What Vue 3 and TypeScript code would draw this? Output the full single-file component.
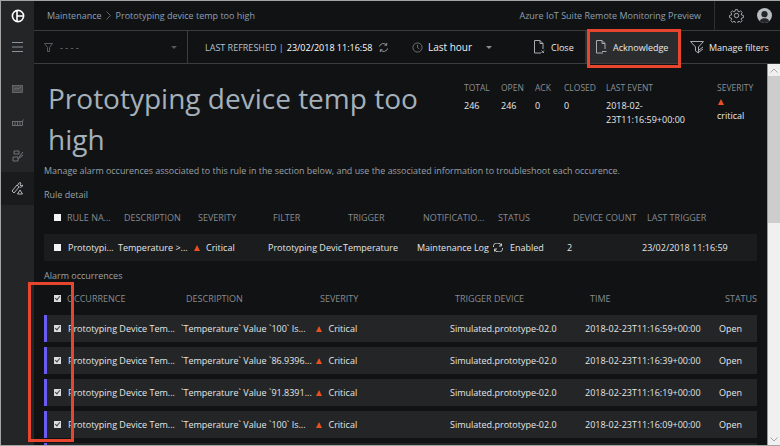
<script setup lang="ts">
const ruleHeads = ['RULE NA...', 'DESCRIPTION', 'SEVERITY', 'FILTER', 'TRIGGER', 'NOTIFICATIO...', 'STATUS', 'DEVICE COUNT', 'LAST TRIGGER']
const alarmHeads = ['OCCURRENCE', 'DESCRIPTION', 'SEVERITY', 'TRIGGER DEVICE', 'TIME', 'STATUS']
const stats = [
  { label: 'TOTAL', value: '246', width: 37 },
  { label: 'OPEN', value: '246', width: 34 },
  { label: 'ACK', value: '0', width: 29 },
  { label: 'CLOSED', value: '0', width: 42 },
  { label: 'LAST EVENT', value: '2018-02-23T11:16:59+00:00', width: 111 },
]
const alarms = [
  { value: "`Temperature` Value `100` Is...", time: '2018-02-23T11:16:59+00:00' },
  { value: "`Temperature` Value `86.9396...", time: '2018-02-23T11:16:39+00:00' },
  { value: "`Temperature` Value `91.8391...", time: '2018-02-23T11:16:19+00:00' },
  { value: "`Temperature` Value `100` Is...", time: '2018-02-23T11:16:09+00:00' },
]
</script>

<template>
  <div class="app">
    <aside class="sidebar">
      <div class="side-logo">
        <svg width="14" height="14" viewBox="0 0 14 14" fill="none" stroke="#fff" stroke-width="1.6"><circle cx="7" cy="7" r="5.6" /><path d="M6 1.5v11M6 7h6" /></svg>
      </div>
      <div class="side-menu">
        <svg width="11" height="12" viewBox="0 0 11 12" stroke="#8b9299" stroke-width="1"><path d="M0 1.5h11M0 6h11M0 10.5h11" /></svg>
      </div>
      <div class="side-item">
        <svg width="12" height="10" viewBox="0 0 12 10" fill="#4a4d50" stroke="#777" stroke-width=".7"><rect x=".5" y=".5" width="10" height="7" /><path d="M2 5l2-2 2 1 3-2" fill="none" /></svg>
      </div>
      <div class="side-item">
        <svg width="12" height="8" viewBox="0 0 12 8" fill="none" stroke="#7c7f82" stroke-width=".8"><rect x=".5" y="2.500" width="10" height="4" /><path d="M3 3v3M5.500 3v3M8 3v3M10.500 2l1-1.500" /></svg>
      </div>
      <div class="side-item">
        <svg width="12" height="12" viewBox="0 0 12 12" fill="none" stroke="#7c7f82" stroke-width=".9"><path d="M2 1h5v3H2zM1 7h5v4H1zM7 7l4-5M6 9l5-4" /></svg>
      </div>
      <div class="side-item active">
        <svg width="13" height="13" viewBox="0 0 13 13" fill="none" stroke="#b5b8bb" stroke-width="1"><path d="M1 9l5-6 2 2-5 6zM7 3a2 2 0 0 1 3-2l-1 2 1 1 1.500-1a2 2 0 0 1-3 2M9 8l-2.500 4h5z" /></svg>
      </div>
    </aside>

    <div class="main">
      <header class="topbar">
        <div class="crumbs">
          <span>Maintenance</span>
          <svg width="6" height="9" viewBox="0 0 6 9" fill="none" stroke="#5e6469"><path d="M.5.5l4 4-4 4" /></svg>
          <span>Prototyping device temp too high</span>
        </div>
        <span class="product">Azure IoT Suite Remote Monitoring Preview</span>
        <div class="top-icons">
          <svg width="15" height="15" viewBox="0 0 24 24" fill="none" stroke="#b5b8bb" stroke-width="1.500"><circle cx="12" cy="12" r="3.500" /><path d="M10 1.500h4l.6 3.200 2 .9 2.700-1.900 2.900 2.900-1.900 2.700.8 2 3.200.6v4l-3.200.6-.8 2 1.900 2.700-2.900 2.900-2.700-1.900-2 .8-.6 3.200h-4l-.6-3.200-2-.8-2.700 1.900-2.900-2.900 1.900-2.700-.9-2-3.200-.6v-4l3.200-.6.900-2-1.900-2.700 2.900-2.900 2.700 1.900 2-.9z" transform="translate(1.200 1.200) scale(.9)" /></svg>
          <span class="avatar">
            <svg width="16" height="16" viewBox="0 0 16 16" fill="#23262a"><circle cx="8" cy="6" r="3.300" /><path d="M2.500 16c0-4 2.500-5.500 5.500-5.500s5.500 1.500 5.500 5.500z" /></svg>
          </span>
        </div>
      </header>

      <div class="toolbar">
        <div class="filter-select">
          <svg width="9" height="9" viewBox="0 0 9 9" fill="none" stroke="#565a5e"><path d="M.5.500h8L5.500 4.500v4h-2v-4z" /></svg>
          <span class="filter-text">- - - -</span>
          <span class="caret dim"></span>
        </div>
        <div class="refresh">
          <span>LAST REFRESHED |</span>
          <b>23/02/2018 11:16:58</b>
          <svg width="11" height="11" viewBox="0 0 12 12" fill="none" stroke="#9a9da0"><path d="M1.500 5a4.500 4.500 0 0 1 8-1.500M10.500 7a4.500 4.500 0 0 1-8 1.500M9.500 1v2.500H7M2.500 11V8.500H5" /></svg>
        </div>
        <div class="range">
          <svg width="11" height="11" viewBox="0 0 12 12" fill="none" stroke="#777"><circle cx="6" cy="6" r="5" /><path d="M6 3v3l2 1.500" /></svg>
          <span>Last hour</span>
          <span class="caret"></span>
        </div>
        <button class="tool close">
          <svg width="12" height="14" viewBox="0 0 12 14" fill="none" stroke="#a9acaf"><path d="M8 13H1.500V.5H7L10 3.500V9M7 .5v3h3M8.500 10.500l2.500 2.500M11 10.500L8.500 13" /></svg>
          Close
        </button>
        <button class="tool ack">
          <svg width="12" height="14" viewBox="0 0 12 14" fill="none" stroke="#a9acaf"><path d="M8 13H1.500V.5H7L10 3.500V9M7 .5v3h3M7 11.500h4.500" /></svg>
          Acknowledge
        </button>
        <button class="tool manage">
          <svg width="14" height="13" viewBox="0 0 14 13" fill="none" stroke="#a9acaf"><path d="M.5.500h13L8.500 6v6L5.500 10V6zM9 9l4-3M9 11l4-3" /></svg>
          Manage filters
        </button>
      </div>

      <div class="body">
        <main class="content">
          <section class="summary">
            <h1>Prototyping device temp too high</h1>
            <div class="stats">
              <div v-for="s in stats" :key="s.label" class="stat" :style="{ width: s.width + 'px' }">
                <div class="stat-label">{{ s.label }}</div>
                <div class="stat-value">{{ s.value }}</div>
              </div>
              <div class="stat">
                <div class="stat-label">SEVERITY</div>
                <div class="stat-value"><i class="tri block"></i>critical</div>
              </div>
            </div>
          </section>

          <p class="intro">Manage alarm occurences associated to this rule in the section below, and use the associated information to troubleshoot each occurence.</p>

          <div class="section-title">Rule detail</div>
          <div class="rule-head">
            <span class="cb"></span>
            <span v-for="h in ruleHeads" :key="h">{{ h }}</span>
          </div>
          <div class="rule-row">
            <span class="cb"></span>
            <span>Prototypi...</span>
            <span>Temperature &gt;...</span>
            <span class="sev"><i class="tri"></i>Critical</span>
            <span class="nowrap">Prototyping Devic</span>
            <span>Temperature</span>
            <span class="nowrap">Maintenance Log</span>
            <span class="sev">
              <svg width="12" height="9" viewBox="0 0 12 9" fill="none" stroke="#c8cacc"><path d="M1.500 4a4 3.500 0 0 1 8-1M10.500 5a4 3.500 0 0 1-8 1M9.500 .5V3H7M2.500 8.500V6H5" /></svg>
              Enabled
            </span>
            <span>2</span>
            <span>23/02/2018 11:16:59</span>
          </div>

          <div class="section-title alarm-title">Alarm occurrences</div>
          <div class="alarm-head">
            <span class="cb checked"></span>
            <span v-for="h in alarmHeads" :key="h">{{ h }}</span>
          </div>
          <div v-for="(a, i) in alarms" :key="i" class="alarm-row">
            <span class="cb checked"></span>
            <span>Prototyping Device Tem...</span>
            <span>{{ a.value }}</span>
            <span class="sev"><i class="tri"></i>Critical</span>
            <span>Simulated.prototype-02.0</span>
            <span>{{ a.time }}</span>
            <span>Open</span>
          </div>
          <div class="alarm-row"></div>
        </main>

        <div class="scrollbar">
          <svg width="8" height="5" viewBox="0 0 8 5" fill="none" stroke="#a6a6a6"><path d="M.5 4.500L4 1l3.500 3.500" /></svg>
          <div class="thumb"></div>
          <svg class="down" width="8" height="5" viewBox="0 0 8 5" fill="none" stroke="#a6a6a6"><path d="M.5.500L4 4 7.500.5" /></svg>
        </div>
      </div>
    </div>

    <div class="mark mark-ack"></div>
    <div class="mark mark-check"></div>
  </div>
</template>

<style>
html, body {
  margin: 0;
  background: #111214;
}
</style>

<style scoped>
.app {
  position: relative;
  box-sizing: border-box;
  width: 780px;
  height: 446px;
  display: flex;
  overflow: hidden;
  border: 1px solid #a4a4a4;
  border-right: 0;
  background: #111214;
  color: #e4e5e6;
  font-family: "Open Sans", "Noto Sans", sans-serif;
  font-size: 9px;
}
.sidebar {
  flex: none;
  width: 33px;
  background: #232527;
}
.side-logo, .side-menu, .side-item {
  display: flex;
  align-items: center;
  justify-content: center;
}
.side-logo { height: 29px; }
.side-menu { height: 34px; }
.side-item { height: 33px; }
.side-item:nth-child(3) { margin-top: 9px; }
.side-item.active {
  height: 33px;
  background: #1a1b1d;
}
.main {
  flex: 1;
  min-width: 0;
  display: flex;
  flex-direction: column;
}
.topbar {
  flex: none;
  height: 29px;
  display: flex;
  align-items: center;
  border-bottom: 1px solid #3a3c3e;
  padding-left: 13px;
  color: #8ca0b3;
}
.crumbs {
  flex: 1;
  display: flex;
  align-items: center;
  gap: 4px;
}
.product {
  margin-right: 13px;
}
.top-icons {
  align-self: stretch;
  width: 66px;
  display: flex;
  align-items: center;
  gap: 13px;
  padding-left: 14px;
  box-sizing: border-box;
  border-left: 1px solid #2e3032;
}
.avatar {
  width: 15px;
  height: 15px;
  border-radius: 50%;
  background: #b9bcc0;
  overflow: hidden;
  display: flex;
  justify-content: center;
}
.toolbar {
  flex: none;
  height: 33px;
  display: flex;
  align-items: stretch;
  border-bottom: 1px solid #3a3c3e;
  box-sizing: border-box;
}
.filter-select {
  width: 154px;
  flex: none;
  display: flex;
  align-items: center;
  box-sizing: border-box;
  padding: 0 10px;
  border-right: 1px solid #3a3c3e;
}
.filter-text {
  flex: 1;
  margin-left: 7px;
  color: #7e8184;
}
.caret {
  width: 0;
  height: 0;
  border: 3px solid transparent;
  border-top: 3px solid #8b8e91;
  border-bottom: 0;
}
.caret.dim { border-top-color: #55585b; }
.refresh {
  flex: none;
  display: flex;
  align-items: center;
  gap: 3px;
  padding-left: 17px;
  width: 224px;
  box-sizing: border-box;
  color: #b5c0ca;
  white-space: nowrap;
}
.refresh b {
  font-weight: 400;
  color: #fff;
  margin-right: 3px;
}
.range {
  flex: none;
  width: 121px;
  display: flex;
  align-items: center;
  gap: 5px;
  font-size: 10px;
  box-sizing: border-box;
  color: #f0f0f0;
}
.range .caret { margin-left: 9px; }
.tool {
  flex: none;
  display: flex;
  align-items: center;
  gap: 6px;
  border: 0;
  padding: 0;
  background: transparent;
  color: #e8e9ea;
  font: inherit;
  white-space: nowrap;
}
.close { width: 52px; }
.ack {
  width: 94px;
  padding-left: 10px;
  box-sizing: border-box;
  background: #2b2c2e;
}
.manage {
  padding-left: 11px;
  gap: 5px;
}
.body {
  flex: 1;
  min-height: 0;
  display: flex;
}
.content {
  flex: 1;
  min-width: 0;
  overflow: hidden;
  padding: 0 10px 0 10px;
}
.summary {
  display: flex;
  height: 100px;
}
h1 {
  flex: none;
  width: 413px;
  margin: 14px 0 0 4px;
  font-size: 28px;
  line-height: 41px;
  font-weight: 400;
  color: #a4b0ba;
  height: 82px;
}
.stats {
  display: flex;
  padding-top: 18px;
  margin-left: 3px;
}
.stat-label {
  color: #8b8f93;
  font-size: 8.500px;
  margin-bottom: 6px;
}
.stat-value {
  color: #e8e9ea;
  line-height: 14px;
}
.intro {
  margin: 0;
  line-height: 14px;
  font-size: 8.930px;
  color: #9ba1a6;
}
.section-title {
  margin-top: 10px;
  line-height: 13px;
  color: #9ba1a6;
}
.alarm-title { margin-top: 8px; }
.rule-head, .rule-row, .alarm-head, .alarm-row {
  display: grid;
  align-items: center;
  white-space: nowrap;
}
.rule-head, .alarm-head {
  padding-left: 10px;
  color: #878b8f;
}
.rule-head {
  height: 27px;
  margin: 3px 0;
  grid-template-columns: 13px 57px 74px 75px 75px 75px 75px 75px 74px 1fr;
}
.alarm-head {
  height: 26px;
  margin: 3px 0 4px;
  grid-template-columns: 13px 119px 134px 135px 135px 135px 1fr;
}
.rule-row {
  height: 27px;
  padding-left: 10px;
  background: #1b1c1e;
  grid-template-columns: 14px 50px 75px 75px 75px 74px 75px 75px 75px 1fr;
}
.alarm-row {
  height: 27px;
  margin-bottom: 5px;
  padding-left: 7px;
  background: #232527;
  border-left: 3px solid #6a5cf0;
  grid-template-columns: 14px 113px 135px 134px 135px 134px 1fr;
}
.nowrap { overflow: hidden; }
.cb {
  width: 7px;
  height: 7px;
  background: #f4f4f4;
  display: block;
  position: relative;
}
.cb.checked {
  background: #dcdcdc;
}
.cb.checked::after {
  content: "";
  position: absolute;
  left: 2px;
  top: 0;
  width: 2px;
  height: 4px;
  border: solid #444;
  border-width: 0 1px 1px 0;
  transform: rotate(40deg);
}
.sev {
  display: flex;
  align-items: center;
  gap: 6.500px;
}
.rule-row .sev { gap: 6px; }
.rule-row .tri { margin-left: 1px; }
.tri {
  display: inline-block;
  width: 0;
  height: 0;
  border-left: 3.750px solid transparent;
  border-right: 3.750px solid transparent;
  border-bottom: 6.500px solid #e8501f;
}
.tri.block {
  display: block;
  margin: 4px 0 4px 1px;
}
.scrollbar {
  flex: none;
  width: 13px;
  background: #f0f0f0;
  border-left: 1px solid #9a9a9a;
  box-sizing: border-box;
  display: flex;
  flex-direction: column;
  align-items: center;
  padding-top: 4px;
}
.thumb {
  width: 100%;
  height: 147px;
  margin-top: 3px;
  background: #cdcdcd;
}
.down {
  margin-top: auto;
  margin-bottom: 3px;
}
.mark {
  position: absolute;
  border: 3px solid #e8452f;
  box-sizing: border-box;
  pointer-events: none;
}
.mark-ack {
  left: 586px;
  top: 28px;
  width: 94px;
  height: 39px;
}
.mark-check {
  left: 27px;
  top: 281px;
  width: 46px;
  height: 160px;
}
</style>
